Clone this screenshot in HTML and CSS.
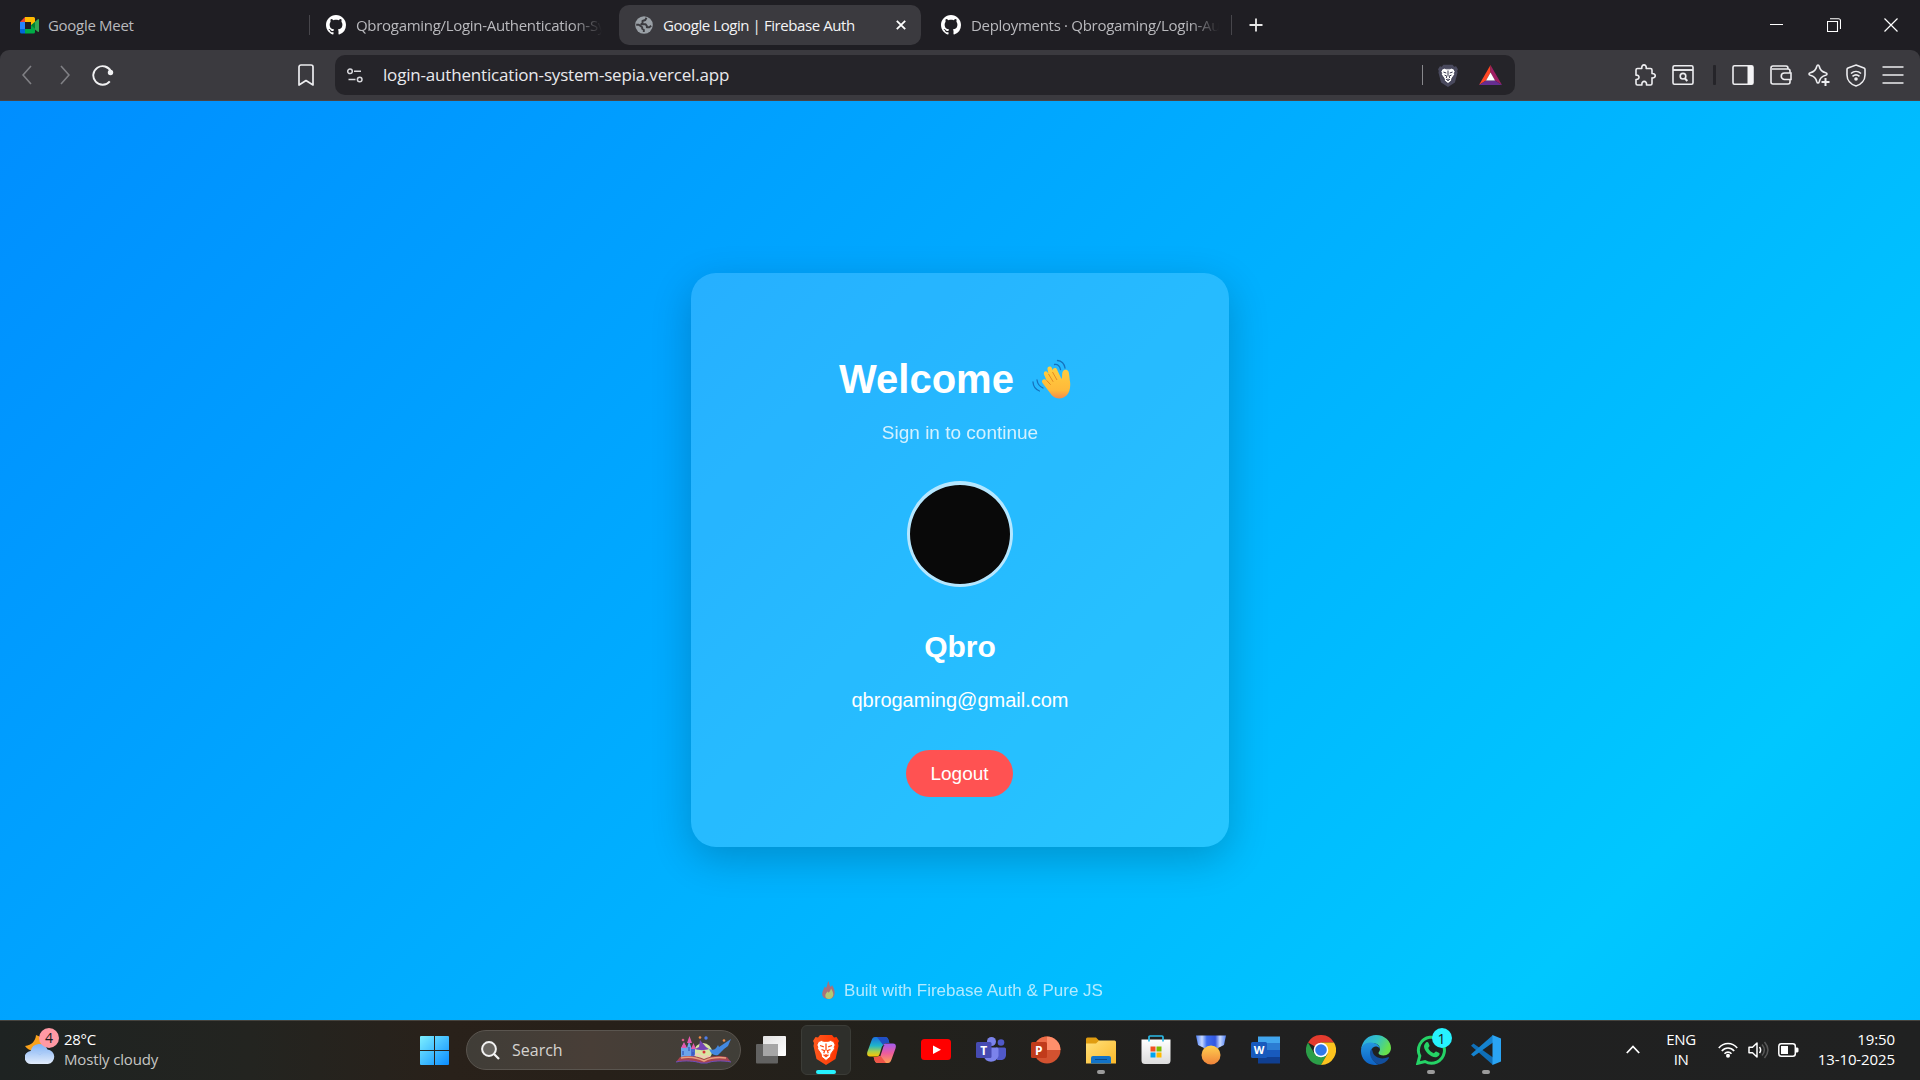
FILE: index.html
```html
<!DOCTYPE html>
<html lang="en">
<head>
<meta charset="utf-8">
<title>Google Login | Firebase Auth</title>
<link rel="stylesheet" href="styles.css">
</head>
<body>
<svg class="defs" width="0" height="0" aria-hidden="true">
  <defs>
    <symbol id="github" viewBox="0 0 16 16"><path fill="#fff" d="M8 0C3.58 0 0 3.58 0 8c0 3.54 2.29 6.53 5.47 7.59.4.07.55-.17.55-.38 0-.19-.01-.82-.01-1.49-2.01.37-2.53-.49-2.69-.94-.09-.23-.48-.94-.82-1.13-.28-.15-.68-.52-.01-.53.63-.01 1.08.58 1.23.82.72 1.21 1.87.87 2.33.66.07-.52.28-.87.51-1.07-1.78-.2-3.64-.89-3.64-3.95 0-.87.31-1.59.82-2.15-.08-.2-.36-1.02.08-2.12 0 0 .67-.21 2.2.82.64-.18 1.32-.27 2-.27s1.36.09 2 .27c1.53-1.04 2.2-.82 2.2-.82.44 1.1.16 1.92.08 2.12.51.56.82 1.27.82 2.15 0 3.07-1.87 3.75-3.65 3.95.29.25.54.73.54 1.48 0 1.07-.01 1.93-.01 2.2 0 .21.15.46.55.38A8.01 8.01 0 0 0 16 8c0-4.42-3.58-8-8-8z"/></symbol>
    <symbol id="lion" viewBox="0 0 26 30">
      <path d="M5.500 6.500l3-1 2 .8h5l2-.8 3 1 1.700 3.500-1 2 .3 1.800-3.500 5-.6 3.200-4.400 3.500-4.400-3.500-.6-3.200-3.500-5 .3-1.800-1-2z" fill="#fff"/>
      <path class="face" d="M7 10.500l3.800 1.300M19 10.500l-3.800 1.300M8.500 14.500l3 1.200-.7 2.500M17.500 14.500l-3 1.200.7 2.500M13 8.500v7M10.500 19.800l2.500 1.800 2.500-1.800M13 19v2.500" fill="none" stroke-width="1.300"/>
    </symbol>
    <linearGradient id="winG" x1="0" y1="0" x2="1" y2="1"><stop offset="0" stop-color="#7df0ff"/><stop offset="1" stop-color="#0a8cff"/></linearGradient>
    <linearGradient id="cloudG" x1="0" y1="0" x2="0" y2="1"><stop offset="0" stop-color="#7fb2f5"/><stop offset="1" stop-color="#e2ecfb"/></linearGradient>
    <linearGradient id="tvG" x1="0" y1="0" x2="1" y2="1"><stop offset="0" stop-color="#e2e2e2"/><stop offset="1" stop-color="#fff"/></linearGradient>
    <linearGradient id="braveG" x1="0" x2="1"><stop offset="0" stop-color="#ff5a1f"/><stop offset="1" stop-color="#ff3300"/></linearGradient>
    <linearGradient id="copA" x1="0" y1="0" x2="0" y2="1"><stop offset="0" stop-color="#1a6fe0"/><stop offset=".45" stop-color="#1fb5c9"/><stop offset=".75" stop-color="#a9d04a"/><stop offset="1" stop-color="#ffc400"/></linearGradient>
    <linearGradient id="copB" x1="0" y1="0" x2="0" y2="1"><stop offset="0" stop-color="#a35cf0"/><stop offset=".5" stop-color="#ee5c9c"/><stop offset="1" stop-color="#ffa052"/></linearGradient>
    <linearGradient id="foldG" x1="0" y1="0" x2="1" y2="1"><stop offset="0" stop-color="#ffe07a"/><stop offset="1" stop-color="#fbb92a"/></linearGradient>
    <linearGradient id="storeG" x1="0" y1="0" x2="0" y2="1"><stop offset="0" stop-color="#fff"/><stop offset="1" stop-color="#dcdcdc"/></linearGradient>
    <linearGradient id="medG" x1="0" y1="0" x2="0" y2="1"><stop offset="0" stop-color="#ffd04f"/><stop offset="1" stop-color="#f0833a"/></linearGradient>
    <linearGradient id="ribG" x1="0" x2="1"><stop offset="0" stop-color="#4f7ff5"/><stop offset=".2" stop-color="#c6d9ff"/><stop offset=".36" stop-color="#3d6ef0"/><stop offset=".64" stop-color="#3357e0"/><stop offset=".8" stop-color="#c6d9ff"/><stop offset="1" stop-color="#4f7ff5"/></linearGradient>
    <linearGradient id="edgeA" x1="0" y1="0" x2="1" y2=".4"><stop offset="0" stop-color="#2aa6e6"/><stop offset=".55" stop-color="#33c3c4"/><stop offset="1" stop-color="#67e04c"/></linearGradient>
    <linearGradient id="edgeB" x1="0" y1="0" x2="0" y2="1"><stop offset="0" stop-color="#2497e0"/><stop offset="1" stop-color="#0d62c4"/></linearGradient>
    <linearGradient id="handG" x1="0" y1="0" x2="0" y2="1"><stop offset="0" stop-color="#ffcf3f"/><stop offset=".75" stop-color="#ffb93a"/><stop offset="1" stop-color="#f58b4c"/></linearGradient>
  </defs>
</svg>

<header class="browser">
  <div class="tabstrip">
    <div class="tab tab-meet">
      <svg width="20" height="18" viewBox="0 0 20 18"><path d="M5 1L0 6h5z" fill="#ea4335"/><path d="M0 6h5v7H0z" fill="#2684fc"/><path d="M0 13h5v4.500H1.500A1.500 1.500 0 0 1 0 16z" fill="#0066da"/><path d="M5 1h8.500A1.500 1.500 0 0 1 15 2.500V7l-4 3V6H5z" fill="#ffba00"/><path d="M5 13h6V9l4 3v4a1.500 1.500 0 0 1-1.500 1.500H5z" fill="#00ac47"/><path d="M11 9.300L17.800 3.200c.6-.4 1.200-.1 1.200.5v11.500c0 .6-.6.900-1.200.5L15 13.500z" fill="#34a853"/><path d="M11 9.300l4-3.300v7z" fill="#00832d"/></svg>
      <span class="title">Google Meet</span>
    </div>
    <i class="tab-sep"></i>
    <div class="tab tab-repo">
      <svg width="20" height="20"><use href="#github"/></svg>
      <span class="title fade">Qbrogaming/Login-Authentication-Sy</span>
    </div>
    <div class="tab tab-active">
      <svg width="18" height="18" viewBox="0 0 18 18"><circle cx="9" cy="9" r="8.800" fill="#9aa0a6"/><path d="M11.500 1.800L10.300 4 7.500 5v2l-1.300 1.200h4.300l1.300 1.600v1.400h2.500l1.900-1.500M1.200 8.800h2.600l3.400 2.400v1.500l1.600 1v2.400" fill="none" stroke="#3b3a3f" stroke-width="1.900" stroke-linejoin="round"/></svg>
      <span class="title">Google Login | Firebase Auth</span>
      <svg class="close" width="10" height="10" viewBox="0 0 10 10"><path d="M.8.8l8.400 8.400M9.200.8L.8 9.200" stroke="#fff" stroke-width="1.800"/></svg>
    </div>
    <div class="tab tab-deploy">
      <svg width="20" height="20"><use href="#github"/></svg>
      <span class="title fade">Deployments · Qbrogaming/Login-Au</span>
    </div>
    <i class="tab-sep"></i>
    <svg class="plus" width="14" height="14" viewBox="0 0 14 14"><path d="M7 .5v13M.5 7h13" stroke="#e8e8e8" stroke-width="1.800"/></svg>
    <div class="window-controls">
      <svg width="14" height="14" viewBox="0 0 14 14"><path d="M0 6.500h13" stroke="#fff"/></svg>
      <svg width="14" height="14" viewBox="0 0 14 14"><path d="M.5 3.500h10v10H.5z M3 .8h8.500a2 2 0 0 1 2 2V11" fill="none" stroke="#fff" stroke-width="1.100"/></svg>
      <svg width="14" height="14" viewBox="0 0 14 14"><path d="M.5.5l13 13M13.500.5l-13 13" stroke="#fff" stroke-width="1.200"/></svg>
    </div>
  </div>
  <div class="toolbar">
    <svg class="back" width="10" height="20" viewBox="0 0 10 20"><path d="M9 1L1 10l8 9" fill="none" stroke="#808085" stroke-width="1.600"/></svg>
    <svg class="forward" width="10" height="20" viewBox="0 0 10 20"><path d="M1 1l8 9-8 9" fill="none" stroke="#808085" stroke-width="1.600"/></svg>
    <svg class="reload" width="22" height="22" viewBox="0 0 22 22"><path d="M17.800 17.300A9.300 9.300 0 1 1 19 7.500" fill="none" stroke="#f0f0f2" stroke-width="1.900"/><circle cx="18.500" cy="8.500" r="2.700" fill="#f0f0f2"/></svg>
    <svg class="bookmark" width="16" height="22" viewBox="0 0 16 22"><path d="M1 3a2 2 0 0 1 2-2h10a2 2 0 0 1 2 2v18l-7-4.500L1 21z" fill="none" stroke="#ededf0" stroke-width="1.700" stroke-linejoin="round"/></svg>
    <div class="urlbar">
      <svg width="16" height="15" viewBox="0 0 16 15"><g fill="none" stroke="#d8d8dc" stroke-width="1.500"><circle cx="3" cy="3.300" r="2.300"/><path d="M7 3.300h7M1.500 11.500h7"/><circle cx="12.700" cy="11.500" r="2.300"/></g></svg>
      <span class="url">login-authentication-system-sepia.vercel.app</span>
      <i class="url-sep"></i>
      <svg class="shield" width="20" height="23" viewBox="0 0 26 30"><path d="M7 1h12l2 2.500 2.500-.5L26 7l-1 2 .5 2-3.500 13-9 6-9-6L.5 11 1 9 0 7l2.500-4 2.500.5z" fill="#4a4a5e"/><use href="#lion" stroke="#33334a"/></svg>
      <svg width="23" height="20" viewBox="0 0 23 20"><path d="M11.500 0L0 20l7-4.500 4.500-8z" fill="#ff4724"/><path d="M11.500 0L23 20l-7-4.500-4.500-8z" fill="#9e1f63"/><path d="M0 20h23l-7-4.500H7z" fill="#662d91"/><path d="M11.500 7.500L16 15.500H7z" fill="#fff"/></svg>
    </div>
    <div class="tools">
      <svg width="22" height="22" viewBox="0 0 22 22"><path d="M3.500 4.500h4.300c-.6-4.800 5-4.800 4.400 0h4.300a1.500 1.500 0 0 1 1.500 1.500v3.600c4.300-.5 4.300 4.800 0 4.300v5.600a1.500 1.500 0 0 1-1.500 1.500h-4c.6-4.800-5.200-4.800-4.600 0H3.500A1.500 1.500 0 0 1 2 19.500v-4c4 .3 4-4.800 0-4.400V6a1.500 1.500 0 0 1 1.500-1.500z" fill="none" stroke="#ededf0" stroke-width="1.600" stroke-linejoin="round"/></svg>
      <svg width="22" height="20" viewBox="0 0 22 20"><g fill="none" stroke="#ededf0" stroke-width="1.600"><rect x="1" y=".8" width="20" height="18.400" rx="1.500"/><path d="M1 5h20" stroke-width="1.900"/><circle cx="11" cy="11.200" r="2.800"/><path d="M13 13.500l2.300 2.500" stroke-width="2"/></g></svg>
      <i class="tool-sep"></i>
      <svg width="22" height="20" viewBox="0 0 22 20"><rect x="1" y=".8" width="20" height="18.400" rx="1.500" fill="none" stroke="#ededf0" stroke-width="1.600"/><path d="M15.500 1H21v18h-5.500z" fill="#f4f4f6"/></svg>
      <svg width="22" height="20" viewBox="0 0 22 20"><g fill="none" stroke="#ededf0" stroke-width="1.600"><path d="M18 3.500c0-1.500-.5-2.500-2-2.500H3a2 2 0 0 0-2 2v14a2 2 0 0 0 2 2h15a2 2 0 0 0 2-2v-2.500M20 8V6a2 2 0 0 0-2-2H2"/><path d="M21 8h-6.500a3.200 3.200 0 0 0 0 6.500H21z"/></g></svg>
      <svg width="22" height="22" viewBox="0 0 22 22"><path d="M10 1c.8 0 1 .6 1.200 1.300.9 4 2.500 5.600 6.500 6.500.7.200 1.300.5 1.300 1.200s-.6 1-1.300 1.200c-4 .9-5.600 2.500-6.500 6.500-.2.700-.5 1.300-1.200 1.300s-1-.6-1.200-1.300c-.9-4-2.500-5.600-6.500-6.500C1.600 11 1 10.700 1 10s.6-1 1.300-1.200c4-.9 5.600-2.500 6.500-6.500C9 1.600 9.300 1 10 1z" fill="#3b3a3f" stroke="#ededf0" stroke-width="1.600"/><circle cx="17.500" cy="17.500" r="4.500" fill="#3b3a3f"/><path d="M17.500 14v8M13.500 18h8" stroke="#ededf0" stroke-width="2"/></svg>
      <svg width="20" height="23" viewBox="0 0 20 23"><g fill="none" stroke="#ededf0" stroke-width="1.600"><path d="M10 1l8 3c1 .4 1 1 1 1.500V11c0 5.500-4 9.500-9 11-5-1.500-9-5.500-9-11V5.500C1 5 1 4.400 2 4z"/><path d="M5 9.500c3-2.700 7-2.700 10 0M6.500 12.300c2.200-1.800 4.800-1.800 7 0"/></g><circle cx="10" cy="15" r="1.800" fill="#ededf0"/></svg>
      <svg width="22" height="18" viewBox="0 0 22 18"><path d="M.5 1h21M.5 9h21M.5 17h21" stroke="#ededf0" stroke-width="1.700"/></svg>
    </div>
  </div>
</header>

<main class="page">
  <section class="card">
    <h1 class="welcome"><span>Welcome</span>
      <svg width="40" height="40" viewBox="0 0 40 40"><g fill="none" stroke="#1673bd" stroke-width="1.300" stroke-linecap="round"><path d="M22.500 5.500c3-.6 5.500 1.500 6 5M25.500 1.500c4 .2 7 3.500 7.500 7.500M5 21c.6 4 2.500 6.500 6 8M1 23c.3 4.500 2.500 7.500 6.500 9"/></g><path d="M10.500 24c-1.500-2 .5-4.500 2.700-3.500l1.300.8-2.500-5.800c-.9-2.800 2.200-4.300 3.700-2l.8 1.500-1-4.500c-.5-3 3-4 4.300-1.500l1 2.500c-.3-2.600 3-3.500 4.200-1l4.500 9.500c.8-1.500.5-3.500.7-5.500.2-4 4-5 6-2.500 1 1.500 1.300 7 1.800 10.500.8 5.500-.5 11-3.500 14-4.500 4.200-10.500 3.700-14.500 0z" fill="url(#handG)"/><path d="M14.500 21.300l4.200 4.500M16.500 15l4.700 7.800M20.500 13l4.500 8" stroke="#e48b22" stroke-width="1" fill="none"/></svg>
    </h1>
    <p class="subtitle">Sign in to continue</p>
    <div class="avatar"></div>
    <h2 class="name">Qbro</h2>
    <p class="email">qbrogaming@gmail.com</p>
    <button class="logout">Logout</button>
  </section>
  <footer class="footer">
    <svg width="13" height="18" viewBox="0 0 13 18"><path d="M6.500 0c1 3 .5 4.500 2.500 6l1-2c2.500 4 3 7 2.500 9.500-.7 3-3 4.500-6 4.500S.5 16.500.2 13.500C0 10 2 8.500 2.500 5.500L4 7c1.500-2 1-4.500 2.500-7z" fill="#ef5545"/><path d="M9 7.500c2 3.500 2.800 5.500 2 7.500-.8 2-2.300 3-4 3s-3.500-.8-3.700-3c-.1-2.500 2-4 2.500-4.500l.7 1.300C7.500 11 8.700 9.500 9 7.500z" fill="#ffd23c"/></svg>
    <span>Built with Firebase Auth &amp; Pure JS</span>
  </footer>
</main>

<div class="taskbar">
  <div class="weather">
    <div class="weather-icon">
      <svg width="30" height="30" viewBox="0 0 30 30"><path d="M11 0c-.5 6-4 10-11 11 3 5 10 6 15 3s5-11-4-14z" fill="#f9a21b"/><path d="M6.500 29a6.500 6.500 0 0 1-.8-13 8.800 8.800 0 0 1 16.800-1.500A7.300 7.300 0 0 1 23 29z" fill="url(#cloudG)"/><path d="M3 18c6-3 10 0 12 2 3-4 8-4 12-1" fill="none" stroke="#a9c9f7"/></svg>
      <b class="count count-pink">4</b>
    </div>
    <div class="weather-text"><span class="temp">28°C</span><span class="cond">Mostly cloudy</span></div>
  </div>
  <svg class="start" width="29" height="29" viewBox="0 0 29 29"><path d="M0 1a1 1 0 0 1 1-1h13v14H0zM15 0h13a1 1 0 0 1 1 1v13H15zM0 15h14v14H1a1 1 0 0 1-1-1zM15 15h14v13a1 1 0 0 1-1 1H15z" fill="url(#winG)"/></svg>
  <div class="search">
    <svg width="19" height="19" viewBox="0 0 19 19"><circle cx="8" cy="8" r="6.900" fill="#67645f" stroke="#f2f2f2" stroke-width="2"/><path d="M13 13l5 5" stroke="#f2f2f2" stroke-width="2.300"/></svg>
    <span>Search</span>
    <svg class="story" width="56" height="28" viewBox="0 0 56 28"><circle cx="27" cy="16" r="9" fill="#d7e5a0"/><path d="M5 22V12l3-5 3 5 2-7 2.500 7 2 10z" fill="#6da4ea"/><path d="M5 12l3-6 3 6zM11 7l2.500-7L16 7zM15 13l2.500-6 2.500 6z" fill="#e258ae"/><path d="M19 22v-9h-4v9z" fill="#4a69cf"/><path d="M7 15v4M13 11v4M17 16v3" stroke="#3556b8" stroke-width="1.200"/><path d="M19 13l4-2 1-7 6 7 3 2c-4 1.500-10 1.500-14 0z" fill="#7545b5"/><path d="M33 13c5 2 7 0 9-4l1 2 12-8-3 7-4 3-6 6c-4 1-7-1-9-6z" fill="#4388e0"/><path d="M19 20c2-3 4-2 6 0s5-1 9 1" fill="none" stroke="#f1c9b8" stroke-width="2"/><circle cx="28" cy="16" r="1.500" fill="#d8343c"/><path d="M0 26l4-5c9-2 18-1 24 2 6-3 15-4 23-2l4 5c-9-2-20-1-24 1h-6c-6-2-16-3-25-1z" fill="#a8434f"/><path d="M5 22c9-2 17 0 23 3 6-3 14-4 22-3" fill="none" stroke="#e8a07c" stroke-width="1.500"/><path d="M0 26c9-2 19-1 25 1h6c4-2 15-3 24-1" fill="none" stroke="#6b4fc0"/><circle cx="7" cy="4" r="1.300" fill="#d95a86"/><circle cx="24" cy="1.500" r="1.300" fill="#f08b45"/><circle cx="30" cy="2" r="1.700" fill="#4f7de8"/><circle cx="48" cy="4.500" r="1.300" fill="#f08b45"/></svg>
  </div>
  <div class="apps">
    <div class="app"><svg width="30" height="28" viewBox="0 0 30 28"><rect x="7" y="0" width="23" height="20" rx="1" fill="url(#tvG)"/><rect x="0" y="8" width="22" height="19.500" rx="1" fill="#6b6b6b" opacity=".88"/><path d="M7 8h15v12H7z" fill="#a6a6a6"/></svg></div>
    <div class="app app-current"><svg width="26" height="30" viewBox="0 0 26 30"><path d="M7 0h12l2 2.500 2.500-.5L26 6l-1 2 .5 3-3 13-9.500 6-9.500-6-3-13L1 8 0 6l2.500-4 2.500.5z" fill="url(#braveG)"/><use href="#lion" stroke="#ff4a12"/></svg><i class="bar bar-on"></i></div>
    <div class="app"><svg width="29" height="26" viewBox="0 0 29 26"><path d="M8 0h10c2 0 3 1 3.500 3l.8 3h-3c-2 0-3 1-3.500 3l-2.500 8c-.7 2-2 2.500-3.500 2.500H3c-3 0-3.300-2.500-2.500-5l4-11C5.300 1.200 6 0 8 0z" fill="url(#copA)"/><path d="M21 26H11c-2 0-3-1-3.500-3l-.8-3h3c2 0 3-1 3.500-3l2.500-8c.7-2 2-2.500 3.500-2.500H26c3 0 3.300 2.500 2.500 5l-4 11c-.8 2.300-1.500 3.500-3.500 3.500z" fill="url(#copB)"/><path d="M10 0h8c2 0 3 1 3.500 3l.8 3h-3c-1.500 0-2.600.6-3.200 2z" fill="#214fc4"/><path d="M19 26h-8c-2 0-3-1-3.500-3l-.8-3h3c1.500 0 2.600-.6 3.200-2z" fill="#ee5548"/><path d="M14.800 10l-2 6.500c-.4 1.500-1 2-1.600 2.600h2.200l2.600-8.200c.3-1.200.8-2.200 1.700-2.700h-1.500c-.7.300-1.100.9-1.400 1.800z" fill="#26241f"/></svg></div>
    <div class="app"><svg width="30" height="22" viewBox="0 0 30 22"><rect width="30" height="21" rx="3.500" fill="#f00"/><path d="M12 6.500l8 4.200-8 4.300z" fill="#fff"/></svg></div>
    <div class="app"><svg width="30" height="27" viewBox="0 0 30 27"><circle cx="25" cy="5.500" r="3.300" fill="#5059c9"/><path d="M20 10.500h8.500a1.500 1.500 0 0 1 1.500 1.500v6c0 3-2.500 5-5 5h-4z" fill="#5059c9"/><circle cx="15.500" cy="4.500" r="4.500" fill="#7b83eb"/><path d="M9 10.500h12a1.500 1.500 0 0 1 1.500 1.500v7a7.800 7.800 0 0 1-15 0z" fill="#7b83eb"/><rect y="5" width="15.500" height="16" rx="1.500" fill="#464bb2"/><text class="glyph" x="7.800" y="17.500">T</text></svg></div>
    <div class="app"><svg width="30" height="28" viewBox="0 0 30 28"><circle cx="16" cy="14" r="13.500" fill="#d35230"/><path d="M16 .5A13.500 13.500 0 0 0 2.500 14H16z" fill="#ed6c47"/><path d="M16 .5A13.500 13.500 0 0 1 29.500 14H16z" fill="#ff8f6b"/><rect y="6" width="16" height="16" rx="1.500" fill="#c13b1b"/><text class="glyph" x="7.800" y="18.500">P</text></svg></div>
    <div class="app"><svg width="30" height="27" viewBox="0 0 30 27"><path d="M0 2a1.500 1.500 0 0 1 1.500-1.500H10l3.500 3.500V12H0z" fill="#e09c10"/><path d="M0 6.500h10l3-3h15.500A1.500 1.500 0 0 1 30 5v21.500H0z" fill="url(#foldG)"/><path d="M5 26.500V21a2 2 0 0 1 2-2h16a2 2 0 0 1 2 2v5.500z" fill="#1273c8"/><path d="M9 22.500h12" stroke="#0b4b8a"/></svg><i class="bar"></i></div>
    <div class="app"><svg width="30" height="30" viewBox="0 0 30 30"><path d="M.5 4.500h29v21a3.500 3.500 0 0 1-3.500 3.500H4a3.500 3.500 0 0 1-3.500-3.500z" fill="url(#storeG)"/><path d="M8 6.500V2a1 1 0 0 1 1-1h12a1 1 0 0 1 1 1v4.500" fill="none" stroke="#2bbbe8" stroke-width="1.700"/><path d="M9.500 11.500h5v5h-5z" fill="#f25022"/><path d="M15.500 11.500h5v5h-5z" fill="#7fba00"/><path d="M9.500 17.500h5v5h-5z" fill="#00a4ef"/><path d="M15.500 17.500h5v5h-5z" fill="#ffb900"/></svg></div>
    <div class="app"><svg width="30" height="30" viewBox="0 0 30 30"><path d="M0 .5h30L28 10l-7 3.500H9L2 10z" fill="url(#ribG)"/><circle cx="15" cy="20" r="9.500" fill="url(#medG)"/></svg></div>
    <div class="app"><svg width="30" height="28" viewBox="0 0 30 28"><path d="M7 .5h22V7H7z" fill="#41a5ee"/><path d="M7 7h22v7H7z" fill="#2b7cd3"/><path d="M7 14h22v7H7z" fill="#185abd"/><path d="M7 21h22v6.500H7z" fill="#103f91"/><rect y="6" width="16" height="16" rx="1.500" fill="#185abd"/><text class="glyph small" x="8" y="18">W</text></svg></div>
    <div class="app"><svg width="30" height="30" viewBox="0 0 30 30"><path d="M15 15L2 7.500A15 15 0 0 1 28 7.500H15z" fill="#e33b2e"/><path d="M2 7.500a15 15 0 0 0 13 22.500l6.500-11.300L15 15l-6.500 3.700z" fill="#2b9e48"/><path d="M28 7.500A15 15 0 0 1 15 30l6.500-11.300L15 7.500z" fill="#fcc31e"/><circle cx="15" cy="15" r="7.300" fill="#fff"/><circle cx="15" cy="15" r="5.800" fill="#2f78ea"/></svg></div>
    <div class="app"><svg width="30" height="30" viewBox="0 0 30 30"><path d="M0 15C1 5 8 0 15 0c9 0 15 6.500 15 13 0 4.500-3.500 7.500-7.500 7.500-3 0-5-1-5-2.500 0-1 1.500-1.500 1.500-4C19 10 15 8 11 8 5 8 1 11 0 15z" fill="url(#edgeA)"/><path d="M0 16C0 10 5 7 10 7.500c5 .3 9 3 9 6.500-1-2-3-2.500-4.500-2.500C11 12 9 16 10 20c1 5 5 9 8 9.500C8 32 0 25 0 16z" fill="url(#edgeB)"/><path d="M10.500 13.500C7 18 10 27 18 29.500c4-.5 8-3 10-6.500.3-.7-.3-1-1-.7-7 3-15-.5-15.500-6.300z" fill="#124f9e"/></svg></div>
    <div class="app"><svg width="31" height="30" viewBox="0 0 31 30"><path d="M1.800 28.300l2-7.300A13 13 0 1 1 9 26.500z" fill="none" stroke="#25d366" stroke-width="3"/><path d="M10 7.500c1-.8 2-.6 2.500.5l1 2.500c.2 1-1 1.800-1.300 2.500 1 2.500 3 4.200 5.500 5.300.9-.3 1.500-2 2.500-1.800l3 1.500c1.300 1-.8 4-3.200 4.200-5.500.3-11.500-6-12-10.500 0-1.500.8-3 2-4.200z" fill="#25d366"/></svg><b class="count count-cyan">1</b><i class="bar"></i></div>
    <div class="app"><svg width="30" height="30" viewBox="0 0 30 30"><path d="M0 10.800L2.500 8.500 22 22.500V30z" fill="#0f6fb8"/><path d="M0 19.200l2.500 2.300L22 7.500V0z" fill="#1583cf"/><path d="M21.500 0L30 3.500v23L21.500 30z" fill="#2aa4f4"/></svg><i class="bar"></i></div>
  </div>
  <div class="tray">
    <svg class="chevron" width="14" height="9" viewBox="0 0 14 9"><path d="M.8 8L7 1.500 13.200 8" fill="none" stroke="#fff" stroke-width="1.800"/></svg>
    <div class="lang"><span>ENG</span><span>IN</span></div>
    <svg class="wifi" width="20" height="16" viewBox="0 0 20 16"><g fill="none" stroke="#fff" stroke-width="1.600"><path d="M.8 6c5-6 13.400-6 18.400 0M3.800 9c3.500-4 8.900-4 12.400 0M6.500 11.800c2-2.300 5-2.300 7 0"/></g><circle cx="10" cy="13.800" r="2" fill="#fff"/></svg>
    <svg class="sound" width="21" height="18" viewBox="0 0 21 18"><path d="M1 6.200h3.500L9 2v14l-4.500-4.200H1z" fill="none" stroke="#fff" stroke-width="1.500" stroke-linejoin="round"/><path d="M11.500 6c1.500 2 1.500 4 0 6" fill="none" stroke="#fff" stroke-width="1.500"/><path d="M14 3.500c3 3.500 3 7.500 0 11M16.500 1c4.300 5 4.300 11 0 16" fill="none" stroke="#585858" stroke-width="1.500"/></svg>
    <svg class="battery" width="21" height="14" viewBox="0 0 21 14"><rect x=".8" y=".8" width="16.500" height="12.400" rx="2.500" fill="none" stroke="#fff" stroke-width="1.500"/><path d="M3 3h7v8H3zM18 4.500h1.500l1 1v3l-1 1H18z" fill="#fff"/></svg>
    <div class="clock"><span>19:50</span><span class="date">13-10-2025</span></div>
  </div>
</div>
</body>
</html>
```
FILE: styles.css
```css
* { box-sizing: border-box; }
html, body { margin: 0; height: 100%; }
body {
  display: flex;
  flex-direction: column;
  width: 1920px;
  height: 1080px;
  overflow: hidden;
  font-family: "Open Sans", "Noto Sans", sans-serif;
  color: #fff;
  background: #1f1e23;
}
svg { display: block; flex: none; }
.defs { position: absolute; }
h1, h2, p { margin: 0; }

/* Tab strip */
.browser { flex: none; height: 101px; background: #1f1e23; }
.tabstrip { display: flex; align-items: center; height: 50px; }
.tab { display: flex; align-items: center; height: 40px; }
.title { margin-top: -1px; font-size: 15px; line-height: 20px; color: #b9b9bd; white-space: nowrap; letter-spacing: -0.3px; }
.fade { -webkit-mask-image: linear-gradient(90deg, #000 calc(100% - 30px), transparent); mask-image: linear-gradient(90deg, #000 calc(100% - 30px), transparent); }
.tab-meet { width: 309px; padding-left: 20px; gap: 8px; }
.tab-sep { flex: none; width: 1px; height: 20px; background: #47464b; }
.tab-repo { width: 309px; padding-left: 16px; gap: 10px; }
.tab-repo .title { width: 246px; letter-spacing: -0.3px; }
.tab-active { width: 302px; padding: 0 15px 0 16px; gap: 10px; background: #3b3a3f; border-radius: 10px; }
.tab-active .title { color: #f3f3f5; letter-spacing: -0.42px; }
.close { margin-left: auto; }
.tab-deploy { width: 310px; padding-left: 20px; gap: 10px; }
.tab-deploy .title { width: 248px; }
.plus { margin-left: 17px; }
.window-controls { display: flex; gap: 43px; margin: -1px 22px 0 auto; }

/* Toolbar */
.toolbar { display: flex; align-items: center; height: 51px; background: #3b3a3f; border-radius: 9px 9px 0 0; border-bottom: 1px solid #4a4444; }
.back { margin-left: 22px; }
.forward { margin-left: 28px; }
.reload { margin-left: 22px; }
.bookmark { margin-left: 184px; }
.urlbar { display: flex; align-items: center; width: 1180px; height: 40px; margin-left: 21px; padding: 0 13px 0 12px; background: #252429; border-radius: 10px; }
.url { margin-left: 20px; font-size: 17px; line-height: 24px; color: #e9e9ec; letter-spacing: -0.18px; white-space: nowrap; }
.url-sep { width: 1px; height: 20px; margin-left: auto; background: #88888c; }
.shield { margin: 0 21px 0 15px; }
.tools { display: flex; align-items: center; gap: 16px; margin: 0 16px 0 auto; }
.tool-sep { width: 3px; height: 20px; margin-left: 3px; background: #252429; border-radius: 1px; }

/* Page */
.page {
  display: flex;
  flex-direction: column;
  align-items: center;
  height: 919px;
  padding-top: 172px;
  font-family: "Liberation Sans", Arial, sans-serif;
  background: linear-gradient(135deg, #008eff 0%, #00c7ff 85%, #00bcff 100%);
}
.card {
  display: flex;
  flex-direction: column;
  align-items: center;
  width: 538px;
  height: 574px;
  padding-top: 83px;
  border-radius: 25px;
  background: rgba(255, 255, 255, 0.15);
  position: relative;
}
.card::before {
  content: "";
  position: absolute;
  inset: 0;
  border-radius: 25px;
  box-shadow: 0 12px 40px rgba(0, 0, 0, 0.2);
}
.welcome { display: flex; width: 242px; font-size: 40px; line-height: 46px; font-weight: 700; }
.welcome svg { margin: 3px 0 0 18px; }
.subtitle { margin-top: 20px; font-size: 19px; line-height: 22px; opacity: 0.8; }
.avatar { width: 106px; height: 106px; margin-top: 37px; border: 3px solid #b5e7ff; border-top-width: 4px; border-radius: 50%; background: #090909; }
.name { margin-top: 43px; font-size: 30px; line-height: 34px; }
.email { margin-top: 24px; font-size: 20px; line-height: 24px; }
.logout { width: 107px; height: 47px; margin: 38px 1px 0 0; padding: 0; border: 0; border-radius: 25px; background: #ff5252; color: #fff; font: 19px "Liberation Sans", Arial, sans-serif; }
.footer { display: flex; align-items: center; gap: 9px; margin: auto 0 19px 5px; font-size: 17px; line-height: 20px; opacity: 0.7; }
.footer svg { margin-top: -2px; }

/* Taskbar */
.taskbar {
  display: flex;
  align-items: center;
  height: 60px;
  border-top: 1px solid #46443f;
  background: linear-gradient(90deg, #1e2322 0, #232420 250px, #29211a 450px, #272019 600px, #22211c 900px, #202020 1200px, #202121 100%);
}
.weather { display: flex; align-items: center; width: 420px; padding-left: 25px; gap: 9px; }
.weather-icon { position: relative; margin-top: -2px; }
.count { position: absolute; display: flex; align-items: center; justify-content: center; width: 20px; height: 20px; border-radius: 50%; font-size: 14px; font-weight: 400; color: #16181a; }
.count-pink { left: 14px; top: -7px; background: #ff99a4; }
.count-cyan { left: 28px; top: 3px; background: #26f2ff; }
.weather-text { display: flex; flex-direction: column; margin-top: -4px; font-size: 15px; line-height: 20px; }
.temp { letter-spacing: -0.3px; }
.cond { color: #c6c6c4; letter-spacing: -0.15px; }
.search { display: flex; align-items: center; width: 275px; height: 40px; margin-left: 17px; padding: 0 8px 0 14px; border: 1px solid #5a554f; border-radius: 20px; background: linear-gradient(90deg, #403d37, #483e37 45%, #403e38); color: #d5d3d0; font-size: 16px; }
.search span { margin-left: 12px; }
.story { margin-left: auto; }
.start, .search, .apps { position: relative; top: -0.5px; }
.apps { display: flex; margin-left: 2.5px; }
.app { position: relative; display: flex; align-items: center; justify-content: center; width: 55px; height: 50px; }
.app-current { width: 50px; margin: 0 2.5px; border: 1px solid #3b3c37; border-radius: 6px; background: #2e2f2b; }
.bar { position: absolute; left: 50%; bottom: 1px; width: 8px; height: 4px; margin-left: -4px; border-radius: 2px; background: #9b9b9b; }
.bar-on { bottom: 0; width: 20px; margin-left: -10px; background: #26f2ff; }
.glyph { fill: #fff; font: 700 12px "Open Sans", sans-serif; text-anchor: middle; }
.small { font-size: 11px; }
.tray { display: flex; align-items: center; margin: 0 25px 0 auto; }
.tray svg { position: relative; top: -1px; }
.lang, .clock { display: flex; flex-direction: column; margin-top: -4px; font-size: 15px; line-height: 20px; }
.lang { align-items: center; width: 40px; margin-left: 21px; letter-spacing: -0.4px; }
.wifi { margin-left: 17px; }
.sound { margin-left: 10px; }
.battery { margin-left: 9px; }
.clock { align-items: flex-end; width: 96px; white-space: nowrap; letter-spacing: -0.1px; }
```
